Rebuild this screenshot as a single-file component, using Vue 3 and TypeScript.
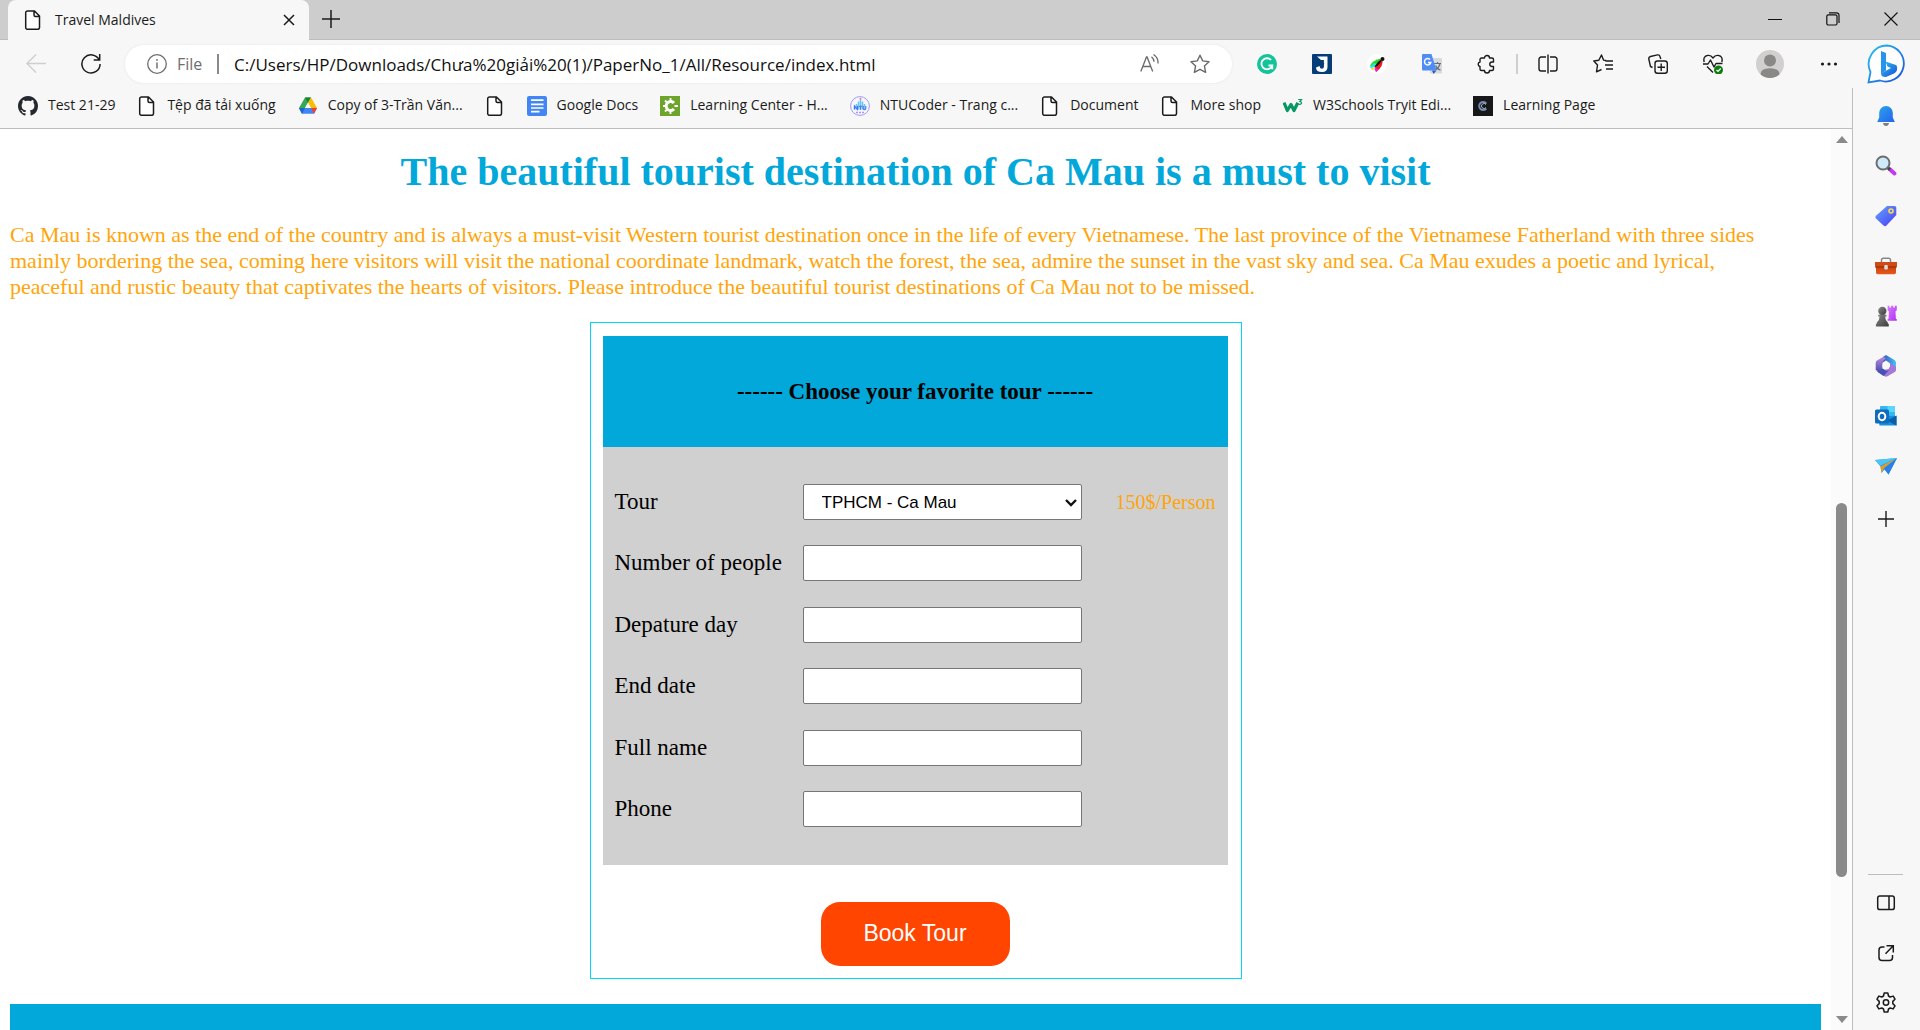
<script setup lang="ts">
import { ref } from 'vue'

interface Bookmark {
  icon: string
  label: string
}

interface Field {
  id: string
  label: string
}

const bookmarks: Bookmark[] = [
  { icon: 'github', label: 'Test 21-29' },
  { icon: 'page', label: 'Tệp đã tải xuống' },
  { icon: 'drive', label: 'Copy of 3-Trần Văn...' },
  { icon: 'page', label: '' },
  { icon: 'docs', label: 'Google Docs' },
  { icon: 'learning', label: 'Learning Center - H...' },
  { icon: 'ntu', label: 'NTUCoder - Trang c...' },
  { icon: 'page', label: 'Document' },
  { icon: 'page', label: 'More shop' },
  { icon: 'w3', label: 'W3Schools Tryit Edi...' },
  { icon: 'code', label: 'Learning Page' },
]

const fields: Field[] = [
  { id: 'people', label: 'Number of people' },
  { id: 'departure', label: 'Depature day' },
  { id: 'end', label: 'End date' },
  { id: 'name', label: 'Full name' },
  { id: 'phone', label: 'Phone' },
]

const extensions = ['grammarly', 'jet', 'feather', 'translate', 'puzzle']
const tools = ['split', 'favorites', 'collections', 'health']
const sideApps = ['bell', 'search', 'tag', 'toolbox', 'chess', 'office', 'outlook', 'plane']
const sideTools = ['panel', 'open', 'gear']

const address = ref('C:/Users/HP/Downloads/Chưa%20giải%20(1)/PaperNo_1/All/Resource/index.html')
const tour = ref('camau')
</script>

<template>
  <svg class="defs" aria-hidden="true">
    <defs>
      <linearGradient id="g-blue" x1="0" y1="0" x2="1" y2="1">
        <stop offset="0" stop-color="#2aa5e8" /><stop offset="1" stop-color="#2563f0" />
      </linearGradient>
      <linearGradient id="g-tag" x1="0" y1="0" x2="1" y2="1">
        <stop offset="0" stop-color="#62a4ff" /><stop offset="1" stop-color="#4a3df2" />
      </linearGradient>
      <linearGradient id="g-box" x1="0" y1="0" x2="0" y2="1">
        <stop offset="0" stop-color="#c33c0c" /><stop offset="1" stop-color="#e8581c" />
      </linearGradient>
      <linearGradient id="g-pawn" x1="0" y1="0" x2="1" y2="1">
        <stop offset="0" stop-color="#8a8a8a" /><stop offset="1" stop-color="#3a3a3a" />
      </linearGradient>
      <linearGradient id="g-rook" x1="0" y1="0" x2="1" y2="1">
        <stop offset="0" stop-color="#d77bff" /><stop offset="1" stop-color="#b02ff0" />
      </linearGradient>
      <linearGradient id="g-office" x1="0" y1="0" x2="1" y2="0">
        <stop offset="0" stop-color="#3a4bb8" /><stop offset="1" stop-color="#45c5f5" />
      </linearGradient>
      <linearGradient id="g-office2" x1="0" y1="0" x2="0" y2="1">
        <stop offset="0" stop-color="#b98be0" /><stop offset="1" stop-color="#4446a8" />
      </linearGradient>
      <linearGradient id="g-bing" x1="0" y1="0" x2="1" y2="1">
        <stop offset="0" stop-color="#29c3f0" /><stop offset="1" stop-color="#1c4fd8" />
      </linearGradient>
    </defs>

    <symbol id="i-page" viewBox="0 0 20 20">
      <path d="M4.500 1h7l5 5v11.500a1.800 1.800 0 0 1-1.800 1.800H4.500a1.800 1.800 0 0 1-1.800-1.800V2.800A1.800 1.800 0 0 1 4.500 1zM11 1.200V5a1.500 1.500 0 0 0 1.500 1.500h4" fill="#fff" stroke="#1b1b1b" stroke-width="1.500" stroke-linejoin="round" />
    </symbol>
    <symbol id="i-github" viewBox="0 0 16 16">
      <path fill="#24292f" d="M8 0C3.580 0 0 3.580 0 8c0 3.540 2.290 6.530 5.470 7.590.4.070.55-.17.55-.38 0-.19-.01-.82-.01-1.490-2.010.37-2.530-.49-2.690-.94-.09-.23-.48-.94-.82-1.130-.28-.15-.68-.52-.01-.53.63-.01 1.080.58 1.230.82.72 1.210 1.870.87 2.330.66.07-.52.28-.87.51-1.070-1.780-.2-3.640-.89-3.640-3.950 0-.87.31-1.590.82-2.150-.08-.2-.36-1.020.08-2.120 0 0 .67-.21 2.200.82.64-.18 1.320-.27 2-.27s1.360.09 2 .27c1.530-1.040 2.200-.82 2.200-.82.44 1.100.16 1.920.08 2.120.51.56.82 1.270.82 2.150 0 3.070-1.870 3.750-3.650 3.950.29.25.54.73.54 1.480 0 1.070-.01 1.930-.01 2.200 0 .21.15.46.55.38A8.010 8.010 0 0 0 16 8c0-4.420-3.580-8-8-8z" />
    </symbol>
    <symbol id="i-drive" viewBox="0 0 20 20">
      <path d="M7 1.500h6L7.600 11 4 17.500 1 12z" fill="#34a853" />
      <path d="M7 1.500h6L10 6.700z" fill="#188038" />
      <path d="M13 1.500 19 12h-6L10 6.700z" fill="#fbbc04" />
      <path d="M1 12h18l-3 5.800H4z" fill="#4285f4" />
      <path d="M1 12h6l-3 5.800z" fill="#1967d2" />
      <path d="M13 12h6l-3 5.800z" fill="#ea4335" />
      <path d="M10 6.800 13 12H7z" fill="#f7f7f7" />
    </symbol>
    <symbol id="i-docs" viewBox="0 0 20 20">
      <rect width="20" height="20" rx="2" fill="#4285f4" />
      <path d="M4 4.200h12.500M4 8.300h12.500M4 12h12.500M4 15.700h8.500" stroke="#fff" stroke-width="1.700" />
    </symbol>
    <symbol id="i-learning" viewBox="0 0 20 20">
      <rect width="20" height="20" fill="#6da52c" />
      <path d="M14 7A4.500 4.500 0 1 0 14 13" fill="none" stroke="#fff" stroke-width="3" />
      <path d="M10.500 2v3M10.500 15v3M3 10h3M5 4.500l2 2M5 15.500l2-2M14.500 10H18" stroke="#fff" stroke-width="1.800" />
    </symbol>
    <symbol id="i-ntu" viewBox="0 0 20 20">
      <circle cx="10" cy="10" r="9.400" fill="#f8f7ff" stroke="#a29aee" />
      <path d="M4.500 9.500v4M6.500 8v5.500M8.500 5.500v8M10.500 3.500v10M12.500 5.500v8M14.500 8v5.500" stroke="#62c5f2" stroke-width="1.500" />
      <path d="M4.500 13.500v-3.500l3 3.500V10M8.800 10.300h3.400M10.500 10.300v3.400M13.200 10v2.500q0 1.200 1.300 1.200t1.300-1.200V10" fill="none" stroke="#4a72e8" stroke-width="1.100" />
      <path d="M6 16.500h8" stroke="#a29aee" stroke-width="1.500" stroke-dasharray="2 1" />
      <circle cx="10.500" cy="2.800" r="1" fill="#ef7a8a" />
    </symbol>
    <symbol id="i-w3" viewBox="0 0 20 20">
      <path d="M1 6.500 4.300 14.500 8 8.500 11 14.500 14.800 6.800" fill="none" stroke="#059862" stroke-width="3.200" stroke-linejoin="round" />
      <path d="M15.300 3.500h3.200l-1.700 2q2 .2 1.700 1.800-.5 1.500-3.200.8" fill="none" stroke="#059862" stroke-width="1.200" />
    </symbol>
    <symbol id="i-code" viewBox="0 0 20 20">
      <rect width="20" height="20" fill="#18181b" />
      <path d="M13.300 7.500A4 4 0 1 0 13.300 12.500" fill="none" stroke="#6e8bb0" stroke-width="2" />
      <path d="M13 8.500a2.500 2.500 0 1 0 0 3" fill="none" stroke="#d8c9dc" stroke-width=".8" />
    </symbol>

    <symbol id="i-grammarly" viewBox="0 0 20 20">
      <circle cx="10" cy="10" r="10" fill="#15c39a" />
      <path d="M14 6A5.500 5.500 0 1 0 15.200 11.500H11.500M15.300 11v4.200" fill="none" stroke="#fff" stroke-width="1.800" />
    </symbol>
    <symbol id="i-jet" viewBox="0 0 20 20">
      <rect width="20" height="20" rx="1" fill="#063d78" />
      <path d="M5 2.500h10.500V13q0 5-5.500 5-6 0-6-4.500L7.500 12q.3 2.700 2.500 2.700 1.900 0 1.900-2.300V6H9z" fill="#fff" />
      <path d="m11 6-3.500 5.500H10L8.500 15 12.500 9.500H10z" fill="#063d78" />
    </symbol>
    <symbol id="i-feather" viewBox="0 0 20 20">
      <circle cx="10" cy="10" r="10" fill="#fff" />
      <path d="M3 12Q5 6 14.500 4.500L8 13z" fill="#27d817" />
      <path d="M2.500 13.500 7 9l3 1-5 4z" fill="#1de9f2" />
      <path d="M15.500 5Q17 12 9 18l-1-6z" fill="#e91b22" />
      <path d="M8 12.500 11 16 9 18 7.500 15z" fill="#ef1ce8" />
      <path d="M7.500 13.500Q10.500 7 14.500 5.500 14 10 7.500 13.500z" fill="#111" />
      <path d="M3.500 14.500 8 13l-2 3.500z" fill="#ffd91c" />
      <circle cx="15.500" cy="5" r="2" fill="#111" />
    </symbol>
    <symbol id="i-translate" viewBox="0 0 20 20">
      <rect x="8" y="4" width="12" height="15.500" rx="1" fill="#d9d9dc" />
      <path d="M12 9.500h7M15.500 8v1.500M18 9.500q-1 4.500-5 6.500M13.500 11.500q1.500 3.500 5 4.500" fill="none" stroke="#5f7080" stroke-width="1.200" />
      <path d="M10 16.500h4.500L11.500 20z" fill="#3154c4" />
      <path d="M1 0h8.500l5 16.500H1a1 1 0 0 1-1-1V1a1 1 0 0 1 1-1z" fill="#4f8df5" />
      <path d="M8 5.500A3.200 3.200 0 1 0 8.800 8.500H6" fill="none" stroke="#fff" stroke-width="1.400" />
    </symbol>
    <symbol id="i-puzzle" viewBox="0 0 20 20">
      <path d="M4.500 4h3a2.500 2.500 0 0 1 5 0H15a1.500 1.500 0 0 1 1.500 1.500V8H15a2 2 0 0 0 0 4.500h1.500V15a1.500 1.500 0 0 1-1.500 1.500h-2.500a2.500 2.500 0 0 1-5 0h-3A1.500 1.500 0 0 1 3 15v-2.500a2.300 2.300 0 0 1 0-4.500V5.500A1.500 1.500 0 0 1 4.500 4z" fill="none" stroke="#1b1b1b" stroke-width="1.400" stroke-linejoin="round" />
    </symbol>
    <symbol id="i-split" viewBox="0 0 20 20">
      <path d="M8 3H3.200A2.200 2.200 0 0 0 1 5.200v9.600A2.200 2.200 0 0 0 3.200 17H8M12 3h4.800A2.200 2.200 0 0 1 19 5.200v9.600a2.200 2.200 0 0 1-2.200 2.200H12M10 .5v19" fill="none" stroke="#1b1b1b" stroke-width="1.400" />
    </symbol>
    <symbol id="i-favorites" viewBox="0 0 20 20">
      <path d="m13 6.500-2.500-.4L8.500 1 5.800 6.300.8 7l3.700 4-1 6.800L8.500 15.500M12.500 7H20M12 11h8M13 15h7" fill="none" stroke="#1b1b1b" stroke-width="1.400" stroke-linejoin="round" />
    </symbol>
    <symbol id="i-collections" viewBox="0 0 20 20">
      <rect x="7" y="7" width="12.300" height="12.300" rx="2.500" fill="none" stroke="#1b1b1b" stroke-width="1.400" />
      <path d="M13.200 9.500v7.500M9.500 13.200H17M4.500 13.500 2.500 12.500.8 5A2.200 2.200 0 0 1 2.500 2.500L9.500.9A2.200 2.200 0 0 1 12 2.500l.8 2.500" fill="none" stroke="#1b1b1b" stroke-width="1.400" />
    </symbol>
    <symbol id="i-health" viewBox="0 0 20 20">
      <path d="M1.200 8Q-.3 2.300 4.800 1.400 8 1 10 4q2-3 5.200-2.600Q20.300 2.300 18.800 8M0 10h5l2.500-4 3.500 7 2-3.500h6.500M4 12.500 10 18.500" fill="none" stroke="#1b1b1b" stroke-width="1.400" stroke-linejoin="round" />
      <circle cx="15.500" cy="16" r="4.500" fill="#107c10" />
      <path d="m13.500 16 1.500 1.500 2.700-3" fill="none" stroke="#fff" stroke-width="1.200" />
    </symbol>

    <symbol id="i-bell" viewBox="0 0 22 22">
      <path d="M8 18h6q-.5 3-3 3t-3-3z" fill="#7d7d7d" />
      <path d="M11 1a6.800 6.800 0 0 1 6.800 6.800v4.700L19.800 17H2.200l2-4.500V7.800A6.800 6.800 0 0 1 11 1z" fill="url(#g-blue)" />
    </symbol>
    <symbol id="i-search" viewBox="0 0 22 22">
      <path d="m14.500 14 5 4.500" stroke="#c239f0" stroke-width="3.800" stroke-linecap="round" />
      <path d="m12.500 12.500 2.500 2.200" stroke="#444" stroke-width="3" />
      <circle cx="8" cy="8" r="6.500" fill="#cfeafa" stroke="#6d6d6d" stroke-width="2" />
    </symbol>
    <symbol id="i-tag" viewBox="0 0 22 22">
      <path d="M12 1h7.500A1.800 1.800 0 0 1 21.300 2.800V10L11.500 20.500q-1.500 1.300-3 0L1 13.500q-1.200-1.300 0-2.700z" fill="url(#g-tag)" />
      <circle cx="16" cy="6" r="2" fill="#5a7ff5" stroke="#ffd84a" stroke-width="1.600" />
    </symbol>
    <symbol id="i-toolbox" viewBox="0 0 22 22">
      <path d="M6.500 7V5A1.800 1.800 0 0 1 8.300 3.200h5.400A1.800 1.800 0 0 1 15.500 5v2" fill="none" stroke="#888" stroke-width="1.500" />
      <path d="M1 10h20v7.500A1.800 1.800 0 0 1 19.200 19.300H2.800A1.800 1.800 0 0 1 1 17.500z" fill="url(#g-box)" />
      <path d="M0 7h22v4.500H0z" fill="#d04a16" />
      <path d="M0 11.500h22v1H0z" fill="#8f2b08" />
      <rect x="9.300" y="10" width="3.500" height="4.500" rx="1" fill="#dedede" />
    </symbol>
    <symbol id="i-chess" viewBox="0 0 24 24">
      <path d="M14.500 1h2v2h2V1h2.500v2h2V1H25v5l-1.500 1.500L24 16h1v2H14.500v-2h1l.5-8.500L14.500 6z" transform="scale(.95)" fill="url(#g-rook)" />
      <circle cx="8" cy="6.500" r="4.500" fill="url(#g-pawn)" />
      <path d="M3.500 10.500h9v2H11q0 4 3 6.500v1.500h1v3H1v-3h1V19q3-2.500 3-6.500H3.500z" fill="url(#g-pawn)" />
    </symbol>
    <symbol id="i-office" viewBox="0 0 22 22">
      <path d="M8 2 11 0l8.500 5Q21 6 21 7.500V13q-5-1-6.500-5L11 5.500 7 8z" fill="url(#g-office)" />
      <path d="M8 2 2 5.500Q.7 6.300.7 8v7l5.300 3 1.500-4V7l3.500-4z" fill="url(#g-office2)" />
      <path d="M2 16.500 11 14l4-2.500V8l6 4v3q0 1.300-1.200 2L12.500 21.300q-1.500.8-3 0z" fill="#a478d8" />
      <path d="m2 16.500 6-3 3 2.500 3-1-5.500 6z" fill="#4653b5" />
      <circle cx="11" cy="11" r="3.600" fill="#f7f7f7" />
    </symbol>
    <symbol id="i-outlook" viewBox="0 0 22 22">
      <rect x="5" y="1" width="15" height="12" rx="1" fill="#35b8f1" />
      <path d="M12.500 1h6.500a1 1 0 0 1 1 1v5h-7.500z" fill="#58d6ff" />
      <path d="M3 10.500 21.500 11v9.500H4.500z" fill="#1490df" />
      <path d="M21.500 10.500v10L12 15.500z" fill="#0a5ea8" />
      <rect x="0" y="4.500" width="14" height="14" rx="1.500" fill="#0f6cbd" />
      <ellipse cx="7" cy="11.500" rx="3.300" ry="3.700" fill="none" stroke="#fff" stroke-width="2" />
    </symbol>
    <symbol id="i-plane" viewBox="0 0 22 22">
      <path d="M0 5 22 3 13.500 19.500 9.500 14.500 6.500 18 5.500 11.500z" fill="#2aa0ec" />
      <path d="M22 3 5.500 11.500 6.500 18 9 13z" fill="#e99a1c" />
      <path d="M22 3 9 13.500l4.500 6z" fill="#2a7fe8" />
      <path d="M0 5 22 3 5.500 10.500z" fill="#4cc5f7" />
    </symbol>
    <symbol id="i-panel" viewBox="0 0 20 20">
      <rect x="1.700" y="3" width="16.600" height="13.600" rx="2.200" fill="none" stroke="#1b1b1b" stroke-width="1.500" />
      <path d="M13 3v13.600" stroke="#1b1b1b" stroke-width="1.500" />
    </symbol>
    <symbol id="i-open" viewBox="0 0 20 20">
      <path d="M8.500 4H6a3 3 0 0 0-3 3v7.500a3 3 0 0 0 3 3h7.500a3 3 0 0 0 3-3V12M10.500 2.700h6.800v6.800M17 3 9.500 10.700" fill="none" stroke="#1b1b1b" stroke-width="1.500" />
    </symbol>
    <symbol id="i-gear" viewBox="0 0 22 22">
      <path d="M9.200 1h3.600l.7 3 1.700 1 3-.9 1.800 3.100-2.200 2.200v2.200l2.200 2.200-1.800 3.100-3-.9-1.700 1-.7 3H9.200l-.7-3-1.700-1-3 .9L2 13.800l2.200-2.200V9.400L2 7.200l1.800-3.100 3 .9 1.700-1z" fill="none" stroke="#1b1b1b" stroke-width="1.500" stroke-linejoin="round" />
      <circle cx="11" cy="10.500" r="2.700" fill="none" stroke="#1b1b1b" stroke-width="1.500" />
    </symbol>
  </svg>

  <div class="window">
    <header class="titlebar">
      <div class="tab">
        <svg class="icon"><use href="#i-page" /></svg>
        <span class="tab-title">Travel Maldives</span>
        <button class="plain" aria-label="Close tab">
          <svg width="12" height="12" viewBox="0 0 12 12"><path d="m1 1 10 10M11 1 1 11" stroke="#1b1b1b" stroke-width="1.500" /></svg>
        </button>
      </div>
      <button class="plain new-tab" aria-label="New tab">
        <svg width="18" height="18" viewBox="0 0 18 18"><path d="M9 0v18M0 9h18" stroke="#1b1b1b" stroke-width="1.500" /></svg>
      </button>
      <div class="controls">
        <button class="plain control" aria-label="Minimize">
          <svg width="14" height="14" viewBox="0 0 14 14"><path d="M0 7.500h14" stroke="#111" /></svg>
        </button>
        <button class="plain control" aria-label="Restore">
          <svg width="14" height="14" viewBox="0 0 14 14" fill="none" stroke="#111" stroke-width="1.200"><rect x=".8" y="2.800" width="10.200" height="10.200" rx="1.500" /><path d="M3 .8h7.500a2.500 2.500 0 0 1 2.500 2.500V11" /></svg>
        </button>
        <button class="plain control" aria-label="Close">
          <svg width="14" height="14" viewBox="0 0 14 14"><path d="m.5.5 13 13m0-13-13 13" stroke="#111" stroke-width="1.100" /></svg>
        </button>
      </div>
    </header>

    <nav class="toolbar" aria-label="Browser toolbar">
      <button class="plain nav-button" aria-label="Back">
        <svg class="icon" viewBox="0 0 20 20"><path d="M20 9.500H1M10 .5 1 9.500l9 9" fill="none" stroke="#cfcfcf" stroke-width="1.400" /></svg>
      </button>
      <button class="plain nav-button" aria-label="Refresh">
        <svg class="icon" viewBox="0 0 20 20"><path d="M18.200 6A9.100 9.100 0 1 0 19.100 10M18.700 0v6h-6" fill="none" stroke="#1b1b1b" stroke-width="1.500" /></svg>
      </button>
      <div class="address">
        <svg class="icon" viewBox="0 0 20 20" fill="none" stroke="#707070" stroke-width="1.300"><circle cx="10" cy="10" r="9.300" /><path d="M10 8.500v6M10 5v1.800" stroke-width="1.500" /></svg>
        <label class="scheme" for="address">File</label>
        <input id="address" v-model="address" class="url" type="text" />
        <button class="plain address-button" aria-label="Read aloud">
          <svg class="icon" viewBox="0 0 20 20" fill="none" stroke="#6a6a6a" stroke-width="1.300"><path d="M.8 17.500 6.500 3h.6l5.600 14.500M2.800 12.500h8M11.500 2.800q2.500 2 2.500 5M13.500.5q5 3.500 4.500 9" /></svg>
        </button>
        <button class="plain address-button" aria-label="Add to favorites">
          <svg class="icon" viewBox="0 0 20 20"><path d="m10 1.200 2.700 5.700 6.300.8-4.600 4.300 1.200 6.300L10 15.300l-5.600 3 1.200-6.300L1 7.700l6.300-.8z" fill="none" stroke="#6a6a6a" stroke-width="1.400" stroke-linejoin="round" /></svg>
        </button>
      </div>
      <div class="actions">
        <button v-for="name in extensions" :key="name" class="plain action" :aria-label="name">
          <svg class="icon"><use :href="'#i-' + name" /></svg>
        </button>
        <span class="rule"></span>
        <button v-for="name in tools" :key="name" class="plain action" :aria-label="name">
          <svg class="icon"><use :href="'#i-' + name" /></svg>
        </button>
        <button class="plain action wide" aria-label="Profile">
          <svg width="28" height="28" viewBox="0 0 28 28"><circle cx="14" cy="14" r="14" fill="#d2d0ce" /><circle cx="14" cy="10.500" r="6" fill="#8a8886" /><path d="M4.500 24.200q0-6 9.500-6t9.500 6A14 14 0 0 1 4.500 24.200z" fill="#8a8886" /></svg>
        </button>
        <button class="plain action menu" aria-label="Menu">
          <svg width="18" height="4" viewBox="0 0 18 4" fill="#1b1b1b"><circle cx="2.500" cy="2" r="1.600" /><circle cx="9" cy="2" r="1.600" /><circle cx="15.500" cy="2" r="1.600" /></svg>
        </button>
        <button class="plain action wide" aria-label="Chat">
          <svg width="40" height="40" viewBox="0 0 40 40">
            <path d="M20 1.500a18 18 0 1 1-7 35L1.500 38.300 3.500 28A18.500 18.500 0 0 1 20 1.500z" fill="#fff" stroke="url(#g-bing)" stroke-width="1.800" />
            <path d="m14 7 5 2v17.500L14 30z" fill="#2694ea" />
            <path d="m14 29.500 10-5.500-3.500-1.500-2-5L29 21q1.500 1 1 5-.5 2-3 3.500L19 33q-5 0-5-3.500z" fill="url(#g-bing)" />
          </svg>
        </button>
      </div>
    </nav>

    <div class="body">
      <div class="main">
        <nav class="bookmarks" aria-label="Bookmarks">
          <a v-for="(item, index) in bookmarks" :key="index" class="bookmark" href="#">
            <svg class="icon"><use :href="'#i-' + item.icon" /></svg>
            <span v-if="item.label">{{ item.label }}</span>
          </a>
        </nav>
        <div class="viewport">
          <main class="page">
            <h1>The beautiful tourist destination of Ca Mau is a must to visit</h1>
            <p class="intro">
              Ca Mau is known as the end of the country and is always a must-visit Western tourist destination once in the life of every Vietnamese. The last province of the Vietnamese Fatherland with three sides mainly bordering the sea, coming here visitors will visit the national coordinate landmark, watch the forest, the sea, admire the sunset in the vast sky and sea. Ca Mau exudes a poetic and lyrical, peaceful and rustic beauty that captivates the hearts of visitors. Please introduce the beautiful tourist destinations of Ca Mau not to be missed.
            </p>
            <form class="booking" @submit.prevent>
              <h2>------ Choose your favorite tour ------</h2>
              <div class="fields">
                <div class="row">
                  <label for="tour">Tour</label>
                  <div class="select">
                    <select id="tour" v-model="tour">
                      <option value="camau">TPHCM - Ca Mau</option>
                    </select>
                    <svg class="chevron" width="12" height="8" viewBox="0 0 12 8"><path d="m1 1 5 5 5-5" fill="none" stroke="#111" stroke-width="2.400" /></svg>
                  </div>
                  <span class="price">150$/Person</span>
                </div>
                <div v-for="field in fields" :key="field.id" class="row">
                  <label :for="field.id">{{ field.label }}</label>
                  <input :id="field.id" type="text" />
                </div>
              </div>
              <button class="book" type="submit">Book Tour</button>
            </form>
            <div class="footer-band"></div>
          </main>
          <div class="scrollbar">
            <svg width="12" height="7" viewBox="0 0 12 7"><path d="M6 0 12 7H0z" fill="#8a8a8a" /></svg>
            <div class="track"><div class="thumb"></div></div>
            <svg width="12" height="7" viewBox="0 0 12 7"><path d="M0 0h12L6 7z" fill="#8a8a8a" /></svg>
          </div>
        </div>
      </div>

      <aside class="sidebar">
        <button v-for="name in sideApps" :key="name" class="plain side-button" :aria-label="name">
          <svg class="icon large"><use :href="'#i-' + name" /></svg>
        </button>
        <button class="plain side-button customize" aria-label="Customize">
          <svg width="16" height="16" viewBox="0 0 16 16"><path d="M8 0v16M0 8h16" stroke="#1b1b1b" stroke-width="1.400" /></svg>
        </button>
        <span class="side-rule"></span>
        <button v-for="name in sideTools" :key="name" class="plain side-button" :aria-label="name">
          <svg class="icon" :class="{ large: name === 'gear' }"><use :href="'#i-' + name" /></svg>
        </button>
      </aside>
    </div>
  </div>
</template>

<style>
body {
  margin: 0;
}
</style>

<style scoped>
* {
  box-sizing: border-box;
}

.defs {
  position: absolute;
  width: 0;
  height: 0;
}

.window {
  display: flex;
  flex-direction: column;
  height: 100vh;
  overflow: hidden;
  background: #f7f7f7;
  color: #1b1b1b;
  font-family: "Open Sans", "Noto Sans", sans-serif;
  font-size: 14px;
}

.plain {
  display: flex;
  align-items: center;
  justify-content: center;
  padding: 0;
  border: 0;
  background: none;
}

.icon {
  flex: none;
  display: block;
  width: 20px;
  height: 20px;
}

.icon.large {
  width: 22px;
  height: 22px;
}

.titlebar {
  display: flex;
  flex: none;
  height: 40px;
  padding-left: 8px;
  background: linear-gradient(#cdcdcd 39px, #bdbdbd 39px);
}

.tab {
  display: flex;
  align-items: center;
  width: 301px;
  padding: 0 14px 0 15px;
  border-radius: 8px 8px 0 0;
  background: #f7f7f7;
}

.tab-title {
  flex: 1;
  padding: 0 0 2px 12px;
}

.new-tab {
  width: 44px;
  padding-bottom: 2px;
}

.controls {
  display: flex;
  margin-left: auto;
}

.control {
  width: 58px;
  padding-bottom: 2px;
}

.toolbar {
  display: flex;
  flex: none;
  align-items: center;
  height: 48px;
  padding: 0 3px 0 8px;
}

.nav-button {
  width: 55px;
}

.address {
  display: flex;
  flex: 1;
  align-items: center;
  height: 38px;
  margin: 0 7px;
  padding: 0 7px 0 22px;
  border-radius: 19px;
  background: #fff;
  box-shadow: 0 0 3px #e6e6e6;
  font-size: 16px;
}

.scheme {
  width: 42px;
  margin-left: 10px;
  border-right: 2px solid #8a8a8a;
  line-height: 20px;
  color: #6e6e6e;
}

.url {
  flex: 1;
  min-width: 0;
  padding: 0 0 0 15px;
  border: 0;
  outline: 0;
  background: none;
  color: #111;
  font: inherit;
  font-size: 17px;
}

.address-button {
  width: 50px;
}

.actions {
  display: flex;
  align-items: center;
}

.action {
  width: 55px;
}

.action.wide {
  width: 60px;
}

.action.menu {
  width: 57px;
}

.rule {
  width: 2px;
  height: 20px;
  margin: 0 2px;
  background: #cfcfcf;
}

.body {
  display: flex;
  flex: 1;
  min-height: 0;
}

.main {
  display: flex;
  flex: 1;
  flex-direction: column;
  min-width: 0;
}

.bookmarks {
  display: flex;
  flex: none;
  gap: 22px;
  align-items: center;
  height: 41px;
  padding: 0 18px 4px;
  border-bottom: 1px solid #bdbdbd;
  white-space: nowrap;
}

.bookmark {
  display: flex;
  gap: 10px;
  align-items: center;
  color: #1b1b1b;
  line-height: 18px;
  text-decoration: none;
}

.bookmark span {
  padding-bottom: 2px;
}

.viewport {
  display: flex;
  flex: 1;
  min-height: 0;
  background: #fff;
}

.page {
  display: flex;
  flex: 1;
  flex-direction: column;
  min-width: 0;
  padding: 0 10px;
  font-family: "Liberation Serif", serif;
}

h1 {
  margin: 20px 0 0;
  color: #02a8da;
  font-size: 40px;
  line-height: 46px;
  text-align: center;
}

.intro {
  margin: 27px 0 0;
  padding-right: 36px;
  color: #ffa50a;
  font-size: 22px;
  line-height: 26px;
}

.booking {
  width: 652px;
  margin: 22px auto 0;
  padding: 13px 13px 12px 12px;
  border: 1px solid #00d5fa;
}

h2 {
  margin: 0;
  background: #02a8da;
  color: #000;
  font-size: 23px;
  line-height: 111px;
  text-align: center;
}

.fields {
  display: flex;
  flex-direction: column;
  justify-content: space-between;
  min-height: 418px;
  padding: 37px 12px 38px;
  background: #d0d0d0;
  color: #000;
  font-size: 23px;
}

.row {
  display: grid;
  grid-template-columns: 188px 279px 1fr;
  align-items: center;
  height: 36px;
}

.row input,
.row select {
  width: 100%;
  height: 36px;
  border: 1px solid #767676;
  border-radius: 2px;
  background: #fff;
}

.select {
  position: relative;
}

.row select {
  display: block;
  appearance: none;
  padding: 1px 18px 0;
  color: #000;
  font: 17px "Liberation Sans", sans-serif;
}

.chevron {
  position: absolute;
  top: 15px;
  right: 5px;
  pointer-events: none;
}

.price {
  color: #ffa50a;
  font-size: 20px;
  text-align: right;
}

.book {
  display: block;
  width: 189px;
  height: 64px;
  margin: 37px auto 0;
  padding: 0 0 2px;
  border: 0;
  border-radius: 19px;
  background: #ff4500;
  color: #fff;
  font: 23px "Liberation Sans", sans-serif;
}

.footer-band {
  flex: 1;
  margin-top: 25px;
  background: #02a8da;
}

.scrollbar {
  display: flex;
  flex: none;
  flex-direction: column;
  align-items: center;
  width: 21px;
  padding: 7px 0;
  background: #fbfbfb;
}

.track {
  display: flex;
  flex: 1;
  flex-direction: column;
  justify-content: flex-end;
  padding-bottom: 139px;
}

.thumb {
  width: 11px;
  height: 51%;
  border-radius: 6px;
  background: #8a8a8a;
}

.sidebar {
  display: flex;
  flex: none;
  flex-direction: column;
  align-items: center;
  width: 68px;
  padding: 3px 2px 2px 0;
  border-left: 1px solid #bdbdbd;
}

.side-button {
  width: 100%;
  height: 50px;
}

.customize {
  margin-top: 3px;
}

.side-rule {
  width: 35px;
  height: 1px;
  margin: auto 0 3px;
  background: #bdbdbd;
}
</style>
